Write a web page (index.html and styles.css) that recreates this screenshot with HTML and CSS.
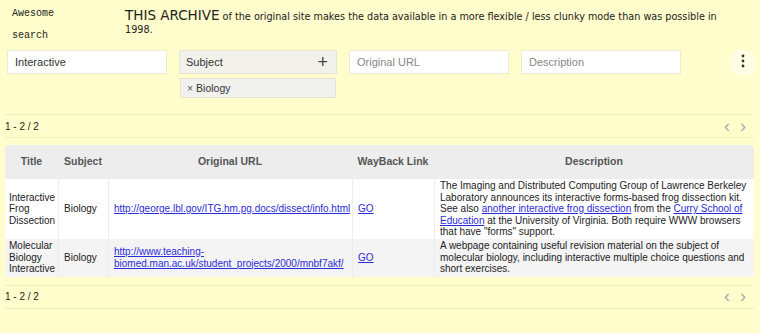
FILE: index.html
```html
<!DOCTYPE html>
<html>
  <head>
    <meta charset="UTF-8" />
    <title>Awesome search</title>
    <link rel="stylesheet" href="styles.css">
  </head>
  <body>
    <div class="header">
      <div class="brand">Awesome search</div>
      <p class="intro"><span class="big">THIS ARCHIVE</span> of the original site makes the data available in a more flexible / less clunky mode than was possible in 1998.</p>
    </div>

    <div class="filters">
      <input type="text" class="field" value="Interactive" />
      <div class="facet">
        <div class="facet-head">
          <span>Subject</span>
          <span class="plus">+</span>
        </div>
        <div class="chip"><span class="x">&times;</span> Biology</div>
      </div>
      <input type="text" class="field" placeholder="Original URL" />
      <input type="text" class="field" placeholder="Description" />
      <button class="more">
        <svg width="4" height="14" viewBox="0 0 4 14"><circle cx="2" cy="2" r="1.4"/><circle cx="2" cy="7" r="1.4"/><circle cx="2" cy="12" r="1.4"/></svg>
      </button>
    </div>

    <div class="pager">
      <span>1 - 2 / 2</span>
      <span class="arrows"><span>&lsaquo;</span><span>&rsaquo;</span></span>
    </div>

    <table class="results">
      <colgroup>
        <col class="c-title">
        <col class="c-subject">
        <col class="c-url">
        <col class="c-way">
        <col class="c-desc">
      </colgroup>
      <thead>
        <tr>
          <th>Title</th>
          <th>Subject</th>
          <th>Original URL</th>
          <th>WayBack Link</th>
          <th>Description</th>
        </tr>
      </thead>
      <tbody>
        <tr>
          <td>Interactive Frog Dissection</td>
          <td>Biology</td>
          <td><a href="#">http://george.lbl.gov/ITG.hm.pg.docs/dissect/info.html</a></td>
          <td><a href="#">GO</a></td>
          <td>The Imaging and Distributed Computing Group of Lawrence Berkeley Laboratory announces its interactive forms-based frog dissection kit. See also <a href="#">another interactive frog dissection</a> from the <a href="#">Curry School of Education</a> at the University of Virginia. Both require WWW browsers that have "forms" support.</td>
        </tr>
        <tr>
          <td>Molecular Biology Interactive</td>
          <td>Biology</td>
          <td><a href="#">http://www.teaching-biomed.man.ac.uk/student_projects/2000/mnbf7akf/</a></td>
          <td><a href="#">GO</a></td>
          <td>A webpage containing useful revision material on the subject of molecular biology, including interactive multiple choice questions and short exercises.</td>
        </tr>
      </tbody>
    </table>

    <div class="pager">
      <span>1 - 2 / 2</span>
      <span class="arrows"><span>&lsaquo;</span><span>&rsaquo;</span></span>
    </div>
  </body>
</html>
```

FILE: styles.css
```css
body {
  margin: 0;
  padding: 0 6px 0 5px;
  background-color: #fefdcb;
  color: #222;
  font-family: "Liberation Sans", Arial, sans-serif;
}

.header {
  display: flex;
  align-items: flex-start;
  height: 43px;
  padding-top: 3px;
}

.brand {
  width: 50px;
  margin: 0 63px 0 7px;
  font-family: "Liberation Mono", "Courier New", monospace;
  font-size: 10px;
  line-height: 22px;
}

.intro {
  width: 600px;
  margin: 6px 0 0;
  font-family: "DejaVu Sans", Verdana, sans-serif;
  font-size: 9.66px;
  line-height: 13px;
  color: #222;
}

.big {
  font-size: 13.5px;
}

.filters {
  display: flex;
  align-items: flex-start;
  gap: 12px;
  padding: 4px 0 0 2px;
  height: 64px;
}

.field {
  flex-shrink: 0;
  width: 160px;
  height: 24px;
  margin: 0;
  padding: 0 7px;
  box-sizing: border-box;
  border: 1px solid #ecebd8;
  background-color: white;
  font-family: "Liberation Sans", Arial, sans-serif;
  font-size: 11px;
  color: #333;
  outline: none;
}

.field::placeholder {
  color: #888;
}

.facet {
  flex-shrink: 0;
  width: 158px;
}

.facet-head {
  display: flex;
  justify-content: space-between;
  align-items: center;
  height: 24px;
  padding: 0 8px 0 6px;
  box-sizing: border-box;
  background-color: #f2f1ea;
  border: 1px solid #e6e5d6;
  font-size: 11px;
  color: #333;
}

.plus {
  font-size: 18px;
  font-weight: 300;
  color: #444;
}

.chip {
  margin: 4px 1px 0 1px;
  height: 20px;
  line-height: 19px;
  padding: 0 6px;
  box-sizing: border-box;
  background-color: #f1f1ee;
  border: 1px solid #e3e2d4;
  font-size: 10.5px;
  color: #333;
}

.x {
  color: #555;
}

.more {
  flex-shrink: 0;
  width: 27px;
  height: 27px;
  margin: -1px 0 0 36px;
  padding: 0;
  border: none;
  border-radius: 50%;
  background-color: #fffee4;
  fill: #333;
  cursor: pointer;
}

.pager {
  display: flex;
  justify-content: space-between;
  align-items: center;
  height: 22px;
  border-top: 1px solid #f0eebd;
  border-bottom: 1px solid #f0eebd;
  font-size: 10px;
  color: #222;
}

.arrows {
  display: flex;
  gap: 10px;
  padding-right: 8px;
  font-size: 18px;
  color: #aaa;
}

table.results {
  width: 749px;
  margin: 7px 0 8px;
  table-layout: fixed;
  border-collapse: separate;
  border-spacing: 0;
  font-size: 10px;
  line-height: 11.5px;
  border-radius: 4px;
  overflow: hidden;
}

.c-title { width: 53px; }
.c-subject { width: 50px; }
.c-url { width: 244px; }
.c-way { width: 82px; }
.c-desc { width: 320px; }

.results th {
  height: 34px;
  padding: 0 4px;
  background-color: #ededed;
  color: #555;
  font-weight: bold;
  text-align: center;
  font-size: 10.5px;
}

.results td {
  padding: 1px 5px 1px 5px;
  border-left: 1px solid #ededed;
  vertical-align: middle;
  color: #222;
}

.results td:first-child {
  border-left: none;
  padding-left: 4px;
}

.results tbody tr:nth-child(1) td {
  background-color: #ffffff;
  height: 57px;
}

.results tbody tr:nth-child(2) td {
  background-color: #f4f4f4;
  height: 36px;
}

.results a {
  color: #2b2bd6;
  text-decoration: underline;
}
```
